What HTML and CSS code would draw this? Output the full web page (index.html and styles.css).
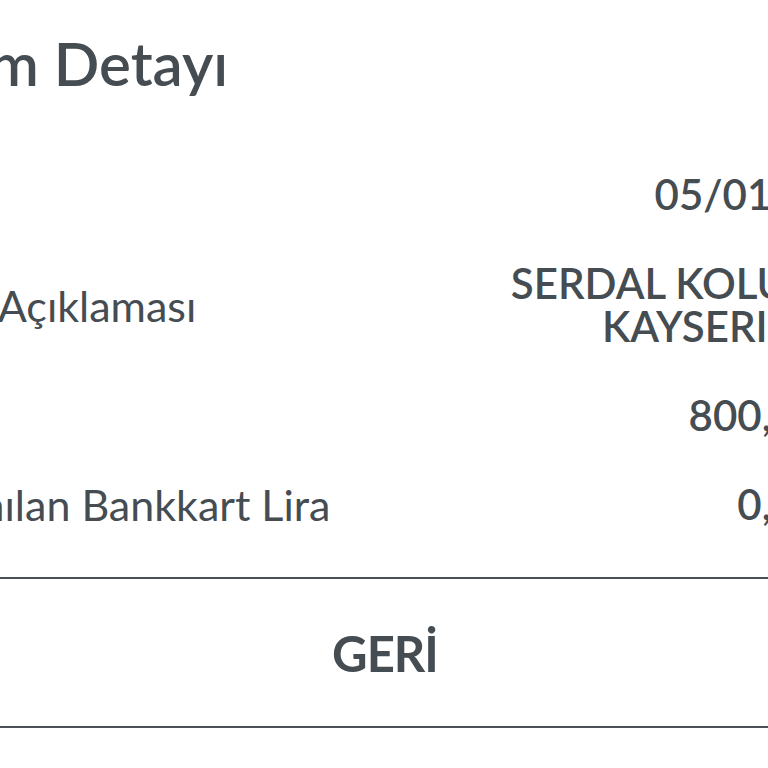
FILE: index.html
```html
<!DOCTYPE html>
<html lang="tr">
<head>
    <meta charset="UTF-8">
    <meta name="viewport" content="width=device-width, initial-scale=1.0">
    <title>İşlem Detayı</title>
    <link rel="stylesheet" href="styles.css">
</head>
<body>
    <div class="screen">
        <h1 class="title">İşlem Detayı</h1>
        <div class="rows">
            <div class="row">
                <div class="label">Tarih</div>
                <div class="value">05/01/2021</div>
            </div>
            <div class="row">
                <div class="label">İşlem Açıklaması</div>
                <div class="value">SERDAL KOLUMAN<br>KAYSERI TURK</div>
            </div>
            <div class="row">
                <div class="label">Tutar</div>
                <div class="value amount">800,00 TL</div>
            </div>
            <div class="row">
                <div class="label">Kazanılan Bankkart Lira</div>
                <div class="value amount">0,00 TL</div>
            </div>
        </div>
        <div class="back">GERİ</div>
    </div>
</body>
</html>
```

FILE: styles.css
```css
html, body { margin: 0; padding: 0; background: #fff; overflow: hidden; }
body { width: 768px; height: 768px; font-family: "Lato", "Noto Sans", sans-serif; color: #454c52; }
.screen { width: 1050px; margin-left: -140px; }
.title { margin: 0; padding: 23px 0 0 40px; font-size: 60px; font-weight: 600; line-height: 80px; }
.rows { padding: 47px 0 8px; }
.row { display: flex; justify-content: space-between; align-items: center; padding: 23px 22px 23px 30px; }
.label { font-size: 43px; line-height: 43px; white-space: nowrap; }
.value { font-size: 42px; line-height: 43px; font-weight: 600; text-align: right; white-space: nowrap; }
.amount { word-spacing: 12px; }
.back { margin-top: 20px; border-top: 2px solid #4a5055; border-bottom: 2px solid #4a5055; height: 147px; display: flex; align-items: center; justify-content: center; font-size: 49px; font-weight: 700; letter-spacing: -1px; }
```
